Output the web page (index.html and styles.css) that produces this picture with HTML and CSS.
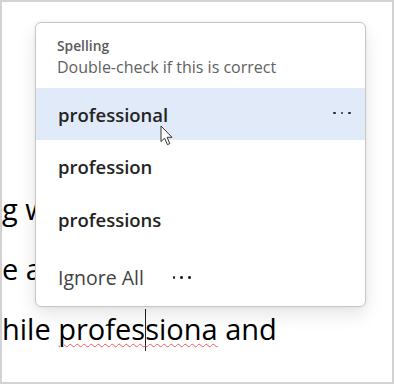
FILE: index.html
```html
<!DOCTYPE html>
<html>
	<head>
		<meta charset="UTF-8">
		<title>Spelling</title>
		<link rel="stylesheet" href="styles.css">
	</head>
	<body>
		<div class="frame">
			<!-- document text behind the menu -->
			<div class="doc">
				<p class="line">g w</p>
				<p class="line">e a</p>
				<p class="line">hile <span class="miss">profes<span class="caret"></span>siona</span> and</p>
			</div>

			<!-- spelling menu -->
			<div class="menu">
				<div class="menu-head">
					<div class="menu-title">Spelling</div>
					<div class="menu-sub">Double-check if this is correct</div>
				</div>
				<div class="item active">
					<span class="word">professional</span>
					<span class="more more-right"><i></i><i></i><i></i></span>
					<svg class="pointer" width="16" height="22" viewBox="0 0 16 22">
						<path d="M1 1 L1 16.5 L4.6 13.2 L7.4 19.6 L9.8 18.6 L7.1 12.3 L12 12.3 Z" fill="#fff" stroke="#333" stroke-width="1" stroke-linejoin="round"/>
					</svg>
				</div>
				<div class="item">
					<span class="word">profession</span>
				</div>
				<div class="item">
					<span class="word">professions</span>
				</div>
				<div class="item ignore">
					<span class="ignore-text">Ignore All</span>
					<span class="more"><i></i><i></i><i></i></span>
				</div>
			</div>
		</div>
	</body>
</html>
```

FILE: styles.css
```css
*{
	margin: 0;
	padding: 0;
	box-sizing: border-box;
}

body{
	font-family: "Open Sans", "Noto Sans", sans-serif;
	background-color: #fff;
}

/* outer frame with gray border */
.frame{
	width: 394px;
	height: 384px;
	border: 2px solid #d2d2d2;
	position: relative;
	overflow: hidden;
	background-color: #fff;
}

/* document text */
.doc{
	padding-top: 177px;
}

.line{
	font-size: 29px;
	line-height: 60px;
	color: #000;
	white-space: nowrap;
}

.miss{
	text-decoration: underline wavy #ee5b5b;
	text-decoration-thickness: 1px;
	text-underline-offset: 3px;
}

.caret{
	display: inline-block;
	width: 1px;
	height: 42px;
	background-color: #222;
	vertical-align: -11px;
	margin-right: -1px;
}

/* menu card */
.menu{
	position: absolute;
	left: 33px;
	top: 20px;
	width: 331px;
	height: 285px;
	background-color: #fff;
	border: 1px solid #c6c6c6;
	border-radius: 6px;
	box-shadow: 0 8px 18px rgba(0,0,0,0.10), 0 0 4px rgba(0,0,0,0.06);
	overflow: hidden;
}

.menu-head{
	padding: 13px 22px 0 21px;
	height: 65px;
}

.menu-title{
	font-size: 13.8px;
	font-weight: 600;
	color: #5a5a5a;
	line-height: 20px;
}

.menu-sub{
	font-size: 16px;
	color: #616161;
	line-height: 22px;
}

.item{
	height: 53px;
	display: flex;
	align-items: center;
	padding: 0 22px;
	position: relative;
}

.item.active{
	height: 52px;
	background-color: #e1eaf9;
}

.word{
	font-size: 18.5px;
	font-weight: 600;
	color: #242424;
	flex: 1;
}

/* three dots menu */
.more{
	display: flex;
	gap: 5px;
}

.more i{
	display: block;
	width: 2.6px;
	height: 2.6px;
	border-radius: 50%;
	background-color: #2a2a2a;
}

.more-right{
	margin-right: -8px;
	margin-top: -2px;
}

.pointer{
	position: absolute;
	left: 124px;
	top: 37px;
}

.item.ignore{
	height: 60px;
	padding-top: 3px;
}

.ignore-text{
	font-size: 19.5px;
	color: #424242;
	margin-right: 29px;
}
```
